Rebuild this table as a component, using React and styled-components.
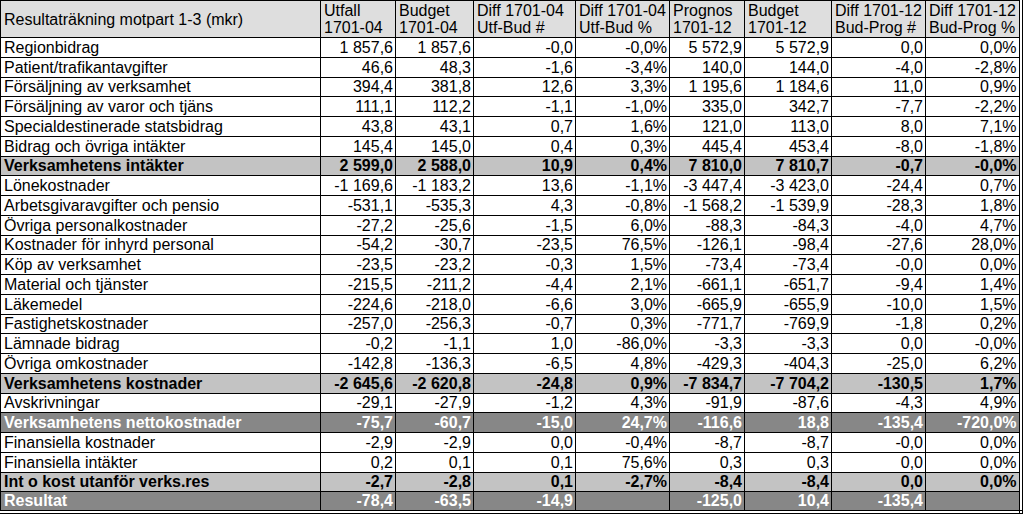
import React from "react";
import styled, { createGlobalStyle } from "styled-components";

const GlobalStyle = createGlobalStyle`
  html, body {
    margin: 0;
    padding: 0;
    background: #ffffff;
  }
  body {
    font-family: "Liberation Sans", Arial, sans-serif;
    color: #000000;
  }
`;

const Sheet = styled.table`
  border-collapse: collapse;
  table-layout: fixed;
  width: 1020px;
  border-top: 1px solid #000;
  border-left: 1px solid #000;
  border-right: 4px double #000;
  border-bottom: 4px double #000;
  font-size: 16px;
`;

const HeadCell = styled.th`
  background: #dedede;
  border: 1px solid #000;
  font-weight: normal;
  text-align: left;
  vertical-align: ${(p) => (p.$title ? "middle" : "top")};
  padding: 1px 3px 0 3px;
  line-height: 17px;
  white-space: nowrap;
  overflow: hidden;
`;

const HeadRow = styled.tr`
  height: 37px;
`;

const BodyRow = styled.tr`
  height: 19.75px;
  background: ${(p) =>
    p.$kind === "dark" ? "#878787" : p.$kind === "sub" ? "#c3c3c3" : "#ffffff"};
  color: ${(p) => (p.$kind === "dark" ? "#ffffff" : "#000000")};
  font-weight: ${(p) => (p.$kind ? "bold" : "normal")};
`;

const LabelCell = styled.td`
  border: 1px solid #000;
  padding: 0 3px;
  line-height: 17px;
  white-space: nowrap;
  overflow: hidden;
  text-align: left;
`;

const NumCell = styled.td`
  border: 1px solid #000;
  padding: 0 2px 0 0;
  line-height: 17px;
  white-space: nowrap;
  overflow: hidden;
  text-align: right;
`;

const widths = [320, 75, 78, 102, 94, 75, 87, 94, 95];

const headers = [
  ["Utfall", "1701-04"],
  ["Budget", "1701-04"],
  ["Diff 1701-04", "Utf-Bud #"],
  ["Diff 1701-04", "Utf-Bud %"],
  ["Prognos", "1701-12"],
  ["Budget", "1701-12"],
  ["Diff 1701-12", "Bud-Prog #"],
  ["Diff 1701-12", "Bud-Prog %"],
];

const rows = [
  ["Regionbidrag", "1 857,6", "1 857,6", "-0,0", "-0,0%", "5 572,9", "5 572,9", "0,0", "0,0%"],
  ["Patient/trafikantavgifter", "46,6", "48,3", "-1,6", "-3,4%", "140,0", "144,0", "-4,0", "-2,8%"],
  ["Försäljning av verksamhet", "394,4", "381,8", "12,6", "3,3%", "1 195,6", "1 184,6", "11,0", "0,9%"],
  ["Försäljning av varor och tjäns", "111,1", "112,2", "-1,1", "-1,0%", "335,0", "342,7", "-7,7", "-2,2%"],
  ["Specialdestinerade statsbidrag", "43,8", "43,1", "0,7", "1,6%", "121,0", "113,0", "8,0", "7,1%"],
  ["Bidrag och övriga intäkter", "145,4", "145,0", "0,4", "0,3%", "445,4", "453,4", "-8,0", "-1,8%"],
  ["Verksamhetens intäkter", "2 599,0", "2 588,0", "10,9", "0,4%", "7 810,0", "7 810,7", "-0,7", "-0,0%", "sub"],
  ["Lönekostnader", "-1 169,6", "-1 183,2", "13,6", "-1,1%", "-3 447,4", "-3 423,0", "-24,4", "0,7%"],
  ["Arbetsgivaravgifter och pensio", "-531,1", "-535,3", "4,3", "-0,8%", "-1 568,2", "-1 539,9", "-28,3", "1,8%"],
  ["Övriga personalkostnader", "-27,2", "-25,6", "-1,5", "6,0%", "-88,3", "-84,3", "-4,0", "4,7%"],
  ["Kostnader för inhyrd personal", "-54,2", "-30,7", "-23,5", "76,5%", "-126,1", "-98,4", "-27,6", "28,0%"],
  ["Köp av verksamhet", "-23,5", "-23,2", "-0,3", "1,5%", "-73,4", "-73,4", "-0,0", "0,0%"],
  ["Material och tjänster", "-215,5", "-211,2", "-4,4", "2,1%", "-661,1", "-651,7", "-9,4", "1,4%"],
  ["Läkemedel", "-224,6", "-218,0", "-6,6", "3,0%", "-665,9", "-655,9", "-10,0", "1,5%"],
  ["Fastighetskostnader", "-257,0", "-256,3", "-0,7", "0,3%", "-771,7", "-769,9", "-1,8", "0,2%"],
  ["Lämnade bidrag", "-0,2", "-1,1", "1,0", "-86,0%", "-3,3", "-3,3", "0,0", "-0,0%"],
  ["Övriga omkostnader", "-142,8", "-136,3", "-6,5", "4,8%", "-429,3", "-404,3", "-25,0", "6,2%"],
  ["Verksamhetens kostnader", "-2 645,6", "-2 620,8", "-24,8", "0,9%", "-7 834,7", "-7 704,2", "-130,5", "1,7%", "sub"],
  ["Avskrivningar", "-29,1", "-27,9", "-1,2", "4,3%", "-91,9", "-87,6", "-4,3", "4,9%"],
  ["Verksamhetens nettokostnader", "-75,7", "-60,7", "-15,0", "24,7%", "-116,6", "18,8", "-135,4", "-720,0%", "dark"],
  ["Finansiella kostnader", "-2,9", "-2,9", "0,0", "-0,4%", "-8,7", "-8,7", "-0,0", "0,0%"],
  ["Finansiella intäkter", "0,2", "0,1", "0,1", "75,6%", "0,3", "0,3", "0,0", "0,0%"],
  ["Int o kost utanför verks.res", "-2,7", "-2,8", "0,1", "-2,7%", "-8,4", "-8,4", "0,0", "0,0%", "sub"],
  ["Resultat", "-78,4", "-63,5", "-14,9", "", "-125,0", "10,4", "-135,4", "", "dark"],
];

export default function App() {
  return (
    <>
      <GlobalStyle />
      <Sheet>
        <colgroup>
          {widths.map((w, i) => (
            <col key={i} style={{ width: w }} />
          ))}
        </colgroup>
        <thead>
          <HeadRow>
            <HeadCell $title>Resultaträkning motpart 1-3 (mkr)</HeadCell>
            {headers.map(([a, b], i) => (
              <HeadCell key={i}>
                {a}
                <br />
                {b}
              </HeadCell>
            ))}
          </HeadRow>
        </thead>
        <tbody>
          {rows.map((r) => {
            const kind = r[9];
            return (
              <BodyRow key={r[0]} $kind={kind}>
                <LabelCell>{r[0]}</LabelCell>
                {r.slice(1, 9).map((v, i) => (
                  <NumCell key={i}>{v}</NumCell>
                ))}
              </BodyRow>
            );
          })}
        </tbody>
      </Sheet>
    </>
  );
}
